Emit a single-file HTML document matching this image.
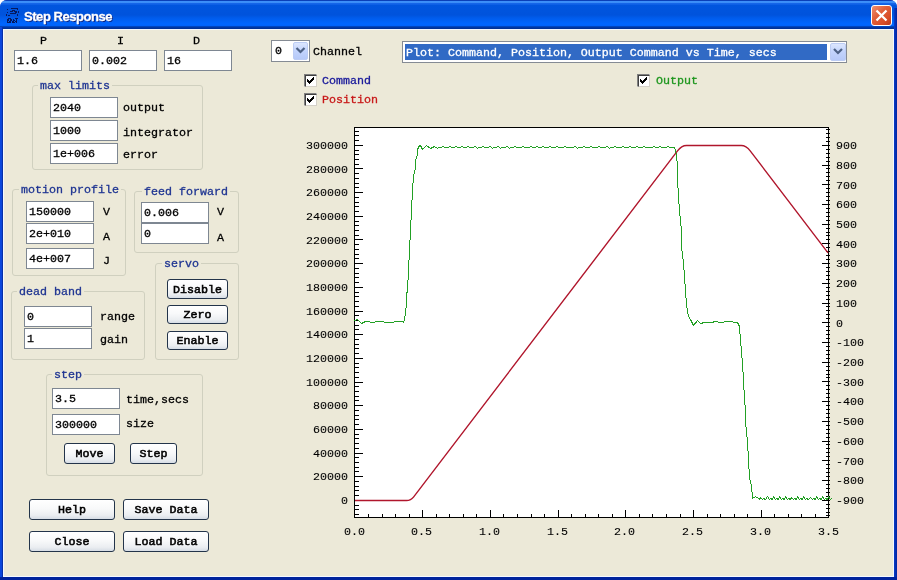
<!DOCTYPE html><html><head><meta charset="utf-8"><title>Step Response</title><style>
*{margin:0;padding:0;box-sizing:border-box}
.t,.pl,.ed span,.btn,.gt{will-change:transform}
html,body{width:897px;height:580px;overflow:hidden;background:#fff}
body{position:relative;font-family:"Liberation Mono", monospace;font-size:11.67px;color:#000;-webkit-text-stroke:0.3px currentColor}
.a{position:absolute}
.pl{position:absolute;white-space:pre;line-height:14px;height:14px;-webkit-text-stroke:0.1px #000}
.t{position:absolute;white-space:pre;line-height:14px;height:14px}
.ed{position:absolute;background:#fff;border:1px solid #7E8792}
.ed span{position:absolute;left:1.5px;top:3px;line-height:14px;white-space:pre}
.btn{position:absolute;padding-top:1px;border:1px solid #23344A;border-radius:3px;-webkit-text-stroke:0.55px #000;
 background:linear-gradient(#FFFFFF 0%,#F8F9FA 45%,#EBEEF1 80%,#D6DDE5 100%);text-align:center;white-space:pre}
.grp{position:absolute;border:1px solid #D0D0BF;border-radius:3px}
.gt{position:absolute;white-space:pre;background:#ECE9D8;color:#1F3592;-webkit-text-stroke:0.3px #1F3592;line-height:14px;padding:0 2px}
.cb{position:absolute;width:13px;height:13px;background:#fff;
 border-top:1px solid #808080;border-left:1px solid #808080;border-right:1px solid #fff;border-bottom:1px solid #fff}
.cb:before{content:'';position:absolute;left:0;top:0;right:-1px;bottom:-1px;border-top:1px solid #404040;border-left:1px solid #404040;border-right:1px solid #D4D0C8;border-bottom:1px solid #D4D0C8}
.cb svg{position:absolute}
</style></head><body>
<div class="a" style="left:0;top:0;width:897px;height:580px;background:#0A3FD0;border-radius:7px 7px 0 0"></div>
<div class="a" style="left:0;top:0;width:897px;height:29px;border-radius:7px 7px 0 0;background:linear-gradient(#0A3FB8 0px,#0A3FB8 1px,#3D90FA 1px,#3A8BF6 3px,#1868EA 3px,#0A5CE4 5px,#0055DE 5px,#0053DC 15px,#005CEC 18px,#0066FF 24px,#0062F8 26px,#0050D8 26px,#003AA8 27px,#002E90 29px)"></div>
<div class="a" style="left:0;top:27px;width:3px;height:553px;background:linear-gradient(90deg,#0B48E0,#0A44D8 2px,#0730A8 2px,#0730A8 3px)"></div>
<div class="a" style="left:894px;top:8px;width:3px;height:572px;background:linear-gradient(90deg,#0A3CC8,#0024A0)"></div>
<div class="a" style="left:0;top:577px;width:897px;height:3px;background:#00239C"></div>
<div class="a" style="left:3px;top:29px;width:891px;height:548px;background:#F4F8FF"></div>
<div class="a" style="left:4px;top:30px;width:889px;height:546px;background:#ECE9D8"></div>
<svg class="a" style="left:0;top:0" width="24" height="26" fill="#06195E" shape-rendering="crispEdges"><rect x="11" y="8" width="1" height="1"/><rect x="12" y="8" width="1" height="1"/><rect x="13" y="8" width="1" height="1"/><rect x="14" y="8" width="1" height="1"/><rect x="15" y="8" width="1" height="1"/><rect x="16" y="8" width="1" height="1"/><rect x="17" y="8" width="1" height="1"/><rect x="17" y="9" width="1" height="1"/><rect x="12" y="10" width="1" height="1"/><rect x="13" y="10" width="1" height="1"/><rect x="14" y="10" width="1" height="1"/><rect x="10" y="11" width="1" height="1"/><rect x="11" y="11" width="1" height="1"/><rect x="12" y="11" width="1" height="1"/><rect x="14" y="11" width="1" height="1"/><rect x="15" y="11" width="1" height="1"/><rect x="16" y="11" width="1" height="1"/><rect x="15" y="12" width="1" height="1"/><rect x="16" y="12" width="1" height="1"/><rect x="10" y="13" width="1" height="1"/><rect x="11" y="13" width="1" height="1"/><rect x="12" y="13" width="1" height="1"/><rect x="13" y="13" width="1" height="1"/><rect x="14" y="13" width="1" height="1"/><rect x="15" y="13" width="1" height="1"/><rect x="7" y="9" width="1" height="1"/><rect x="7" y="12" width="1" height="1"/><rect x="6" y="14" width="1" height="1"/><rect x="6" y="15" width="1" height="1"/><rect x="8" y="15" width="1" height="1"/><rect x="9" y="15" width="1" height="1"/><rect x="18" y="11" width="1" height="1"/><rect x="18" y="12" width="1" height="1"/><rect x="17" y="14" width="1" height="1"/><rect x="17" y="15" width="1" height="1"/><rect x="8" y="18" width="1" height="1"/><rect x="9" y="18" width="1" height="1"/><rect x="10" y="18" width="1" height="1"/><rect x="15" y="18" width="1" height="1"/><rect x="16" y="18" width="1" height="1"/><rect x="17" y="18" width="1" height="1"/><rect x="7" y="19" width="1" height="1"/><rect x="8" y="19" width="1" height="1"/><rect x="10" y="19" width="1" height="1"/><rect x="11" y="19" width="1" height="1"/><rect x="13" y="19" width="1" height="1"/><rect x="16" y="19" width="1" height="1"/><rect x="7" y="20" width="1" height="1"/><rect x="8" y="20" width="1" height="1"/><rect x="10" y="20" width="1" height="1"/><rect x="11" y="20" width="1" height="1"/><rect x="13" y="20" width="1" height="1"/><rect x="14" y="20" width="1" height="1"/><rect x="16" y="20" width="1" height="1"/><rect x="7" y="21" width="1" height="1"/><rect x="9" y="21" width="1" height="1"/><rect x="10" y="21" width="1" height="1"/><rect x="12" y="21" width="1" height="1"/><rect x="13" y="21" width="1" height="1"/><rect x="15" y="21" width="1" height="1"/><rect x="16" y="21" width="1" height="1"/><rect x="7" y="22" width="1" height="1"/><rect x="8" y="22" width="1" height="1"/><rect x="9" y="22" width="1" height="1"/><rect x="10" y="22" width="1" height="1"/><rect x="12" y="22" width="1" height="1"/><rect x="13" y="22" width="1" height="1"/><rect x="14" y="22" width="1" height="1"/><rect x="16" y="22" width="1" height="1"/></svg>
<div class="t" style="left:24px;top:8px;height:18px;line-height:18px;font-family:'Liberation Sans',sans-serif;font-weight:bold;font-size:13px;letter-spacing:-0.45px;color:#fff;text-shadow:1px 1px 0 #0A1F7A">Step Response</div>
<div class="a" style="left:871px;top:5px;width:21px;height:21px;border:1px solid #fff;border-radius:3px;background:linear-gradient(135deg,#F09070 0%,#E0603A 40%,#D84C26 75%,#B8381A 100%)"></div>
<svg class="a" style="left:871px;top:5px" width="21" height="21"><path d="M5.5 5.5L15.5 15.5M15.5 5.5L5.5 15.5" stroke="#fff" stroke-width="2.3"/></svg>
<div class="t" style="left:40px;top:34px;">P</div>
<div class="t" style="left:117px;top:34px;">I</div>
<div class="t" style="left:193px;top:34px;">D</div>
<div class="ed" style="left:14px;top:50px;width:68px;height:21px"><span>1.6</span></div>
<div class="ed" style="left:89px;top:50px;width:68px;height:21px"><span>0.002</span></div>
<div class="ed" style="left:164px;top:50px;width:68px;height:21px"><span>16</span></div>
<div class="grp" style="left:32px;top:85px;width:171px;height:85px"></div>
<div class="gt" style="left:38px;top:79px">max limits</div>
<div class="ed" style="left:50px;top:97px;width:68px;height:21px"><span>2040</span></div>
<div class="ed" style="left:50px;top:120px;width:68px;height:21px"><span>1000</span></div>
<div class="ed" style="left:50px;top:143px;width:68px;height:21px"><span>1e+006</span></div>
<div class="t" style="left:123px;top:101px;">output</div>
<div class="t" style="left:123px;top:126px;">integrator</div>
<div class="t" style="left:123px;top:148px;">error</div>
<div class="grp" style="left:12px;top:189px;width:114px;height:87px"></div>
<div class="gt" style="left:19px;top:183px">motion profile</div>
<div class="ed" style="left:26px;top:201px;width:68px;height:21px"><span>150000</span></div>
<div class="ed" style="left:26px;top:223px;width:68px;height:21px"><span>2e+010</span></div>
<div class="ed" style="left:26px;top:248px;width:68px;height:21px"><span>4e+007</span></div>
<div class="t" style="left:103px;top:205px;">V</div>
<div class="t" style="left:103px;top:230px;">A</div>
<div class="t" style="left:103px;top:254px;">J</div>
<div class="grp" style="left:134px;top:191px;width:105px;height:62px"></div>
<div class="gt" style="left:142px;top:185px">feed forward</div>
<div class="ed" style="left:141px;top:202px;width:68px;height:21px"><span>0.006</span></div>
<div class="ed" style="left:141px;top:223px;width:68px;height:21px"><span>0</span></div>
<div class="t" style="left:217px;top:205px;">V</div>
<div class="t" style="left:217px;top:231px;">A</div>
<div class="grp" style="left:155px;top:263px;width:84px;height:97px"></div>
<div class="gt" style="left:162px;top:257px">servo</div>
<div class="btn" style="left:167px;top:279px;width:61px;height:20px;line-height:18px">Disable</div>
<div class="btn" style="left:167px;top:305px;width:61px;height:19px;line-height:17px">Zero</div>
<div class="btn" style="left:167px;top:331px;width:61px;height:19px;line-height:17px">Enable</div>
<div class="grp" style="left:11px;top:291px;width:134px;height:69px"></div>
<div class="gt" style="left:17px;top:285px">dead band</div>
<div class="ed" style="left:24px;top:306px;width:68px;height:21px"><span>0</span></div>
<div class="ed" style="left:24px;top:328px;width:68px;height:21px"><span>1</span></div>
<div class="t" style="left:100px;top:310px;">range</div>
<div class="t" style="left:100px;top:333px;">gain</div>
<div class="grp" style="left:46px;top:374px;width:157px;height:102px"></div>
<div class="gt" style="left:52px;top:368px">step</div>
<div class="ed" style="left:52px;top:388px;width:68px;height:21px"><span>3.5</span></div>
<div class="ed" style="left:52px;top:414px;width:68px;height:21px"><span>300000</span></div>
<div class="t" style="left:126px;top:393px;">time,secs</div>
<div class="t" style="left:126px;top:417px;">size</div>
<div class="btn" style="left:64px;top:443px;width:51px;height:21px;line-height:19px">Move</div>
<div class="btn" style="left:130px;top:443px;width:47px;height:21px;line-height:19px">Step</div>
<div class="btn" style="left:29px;top:499px;width:86px;height:21px;line-height:19px">Help</div>
<div class="btn" style="left:123px;top:499px;width:86px;height:21px;line-height:19px">Save Data</div>
<div class="btn" style="left:29px;top:531px;width:86px;height:21px;line-height:19px">Close</div>
<div class="btn" style="left:123px;top:531px;width:86px;height:21px;line-height:19px">Load Data</div>
<div class="a" style="left:271px;top:40px;width:39px;height:22px;border:1px solid #858B94;background:#fff"></div>
<div class="t" style="left:275px;top:44px;">0</div>
<div class="a" style="left:293px;top:42px;width:15px;height:18px;border-radius:2px;border:1px solid #BCCCF4;background:linear-gradient(#DCE6FE,#C2D3FC 50%,#B6C9F8)"></div>
<svg class="a" style="left:293px;top:42px" width="15" height="18"><path d="M3.5 6.0L7.5 10.0L11.5 6.0" stroke="#4D6185" stroke-width="2.2" fill="none"/></svg>
<div class="t" style="left:313px;top:45px;">Channel</div>
<div class="a" style="left:402px;top:41px;width:445px;height:22px;border:1px solid #858B94;background:#fff"></div>
<div class="a" style="left:405px;top:44px;width:422px;height:16px;background:#316AC5"></div>
<div class="t" style="left:406px;top:46px;color:#fff">Plot: Command, Position, Output Command vs Time, secs</div>
<div class="a" style="left:830px;top:43px;width:16px;height:18px;border-radius:2px;border:1px solid #BCCCF4;background:linear-gradient(#DCE6FE,#C2D3FC 50%,#B6C9F8)"></div>
<svg class="a" style="left:830px;top:43px" width="16" height="18"><path d="M4.0 6.0L8.0 10.0L12.0 6.0" stroke="#4D6185" stroke-width="2.2" fill="none"/></svg>
<div class="cb" style="left:304px;top:74px"><svg width="7" height="7" shape-rendering="crispEdges" fill="#000" style="left:2px;top:2px"><rect x="6" y="0" width="1" height="1"/><rect x="5" y="1" width="1" height="1"/><rect x="6" y="1" width="1" height="1"/><rect x="0" y="2" width="1" height="1"/><rect x="4" y="2" width="1" height="1"/><rect x="5" y="2" width="1" height="1"/><rect x="6" y="2" width="1" height="1"/><rect x="0" y="3" width="1" height="1"/><rect x="1" y="3" width="1" height="1"/><rect x="3" y="3" width="1" height="1"/><rect x="4" y="3" width="1" height="1"/><rect x="5" y="3" width="1" height="1"/><rect x="0" y="4" width="1" height="1"/><rect x="1" y="4" width="1" height="1"/><rect x="2" y="4" width="1" height="1"/><rect x="3" y="4" width="1" height="1"/><rect x="4" y="4" width="1" height="1"/><rect x="1" y="5" width="1" height="1"/><rect x="2" y="5" width="1" height="1"/><rect x="3" y="5" width="1" height="1"/><rect x="2" y="6" width="1" height="1"/></svg></div>
<div class="t" style="left:322px;top:74px;color:#18189A">Command</div>
<div class="cb" style="left:304px;top:93px"><svg width="7" height="7" shape-rendering="crispEdges" fill="#000" style="left:2px;top:2px"><rect x="6" y="0" width="1" height="1"/><rect x="5" y="1" width="1" height="1"/><rect x="6" y="1" width="1" height="1"/><rect x="0" y="2" width="1" height="1"/><rect x="4" y="2" width="1" height="1"/><rect x="5" y="2" width="1" height="1"/><rect x="6" y="2" width="1" height="1"/><rect x="0" y="3" width="1" height="1"/><rect x="1" y="3" width="1" height="1"/><rect x="3" y="3" width="1" height="1"/><rect x="4" y="3" width="1" height="1"/><rect x="5" y="3" width="1" height="1"/><rect x="0" y="4" width="1" height="1"/><rect x="1" y="4" width="1" height="1"/><rect x="2" y="4" width="1" height="1"/><rect x="3" y="4" width="1" height="1"/><rect x="4" y="4" width="1" height="1"/><rect x="1" y="5" width="1" height="1"/><rect x="2" y="5" width="1" height="1"/><rect x="3" y="5" width="1" height="1"/><rect x="2" y="6" width="1" height="1"/></svg></div>
<div class="t" style="left:322px;top:93px;color:#C81818">Position</div>
<div class="cb" style="left:637px;top:74px"><svg width="7" height="7" shape-rendering="crispEdges" fill="#000" style="left:2px;top:2px"><rect x="6" y="0" width="1" height="1"/><rect x="5" y="1" width="1" height="1"/><rect x="6" y="1" width="1" height="1"/><rect x="0" y="2" width="1" height="1"/><rect x="4" y="2" width="1" height="1"/><rect x="5" y="2" width="1" height="1"/><rect x="6" y="2" width="1" height="1"/><rect x="0" y="3" width="1" height="1"/><rect x="1" y="3" width="1" height="1"/><rect x="3" y="3" width="1" height="1"/><rect x="4" y="3" width="1" height="1"/><rect x="5" y="3" width="1" height="1"/><rect x="0" y="4" width="1" height="1"/><rect x="1" y="4" width="1" height="1"/><rect x="2" y="4" width="1" height="1"/><rect x="3" y="4" width="1" height="1"/><rect x="4" y="4" width="1" height="1"/><rect x="1" y="5" width="1" height="1"/><rect x="2" y="5" width="1" height="1"/><rect x="3" y="5" width="1" height="1"/><rect x="2" y="6" width="1" height="1"/></svg></div>
<div class="t" style="left:656px;top:74px;color:#1E961E">Output</div>
<svg class="a" style="left:0;top:0" width="897" height="580"><rect x="354.5" y="127.5" width="474" height="390" fill="#fff" stroke="#000" stroke-width="1"/><path d="M355 514.5h4M355 509.5h4M355 505.5h4M355 500.5h8M355 495.5h4M355 490.5h4M355 486.5h4M355 481.5h4M355 476.5h8M355 471.5h4M355 467.5h4M355 462.5h4M355 457.5h4M355 453.5h8M355 448.5h4M355 443.5h4M355 438.5h4M355 434.5h4M355 429.5h8M355 424.5h4M355 419.5h4M355 415.5h4M355 410.5h4M355 405.5h8M355 400.5h4M355 396.5h4M355 391.5h4M355 386.5h4M355 382.5h8M355 377.5h4M355 372.5h4M355 367.5h4M355 363.5h4M355 358.5h8M355 353.5h4M355 348.5h4M355 344.5h4M355 339.5h4M355 334.5h8M355 329.5h4M355 325.5h4M355 320.5h4M355 315.5h4M355 311.5h8M355 306.5h4M355 301.5h4M355 296.5h4M355 292.5h4M355 287.5h8M355 282.5h4M355 277.5h4M355 273.5h4M355 268.5h4M355 263.5h8M355 258.5h4M355 254.5h4M355 249.5h4M355 244.5h4M355 239.5h8M355 235.5h4M355 230.5h4M355 225.5h4M355 221.5h4M355 216.5h8M355 211.5h4M355 206.5h4M355 202.5h4M355 197.5h4M355 192.5h8M355 187.5h4M355 183.5h4M355 178.5h4M355 173.5h4M355 168.5h8M355 164.5h4M355 159.5h4M355 154.5h4M355 150.5h4M355 145.5h8M355 140.5h4M355 135.5h4M355 131.5h4M826 515.5h4M826 512.5h4M826 508.5h4M826 504.5h4M822 500.5h8M826 496.5h4M826 492.5h4M826 488.5h4M826 484.5h4M822 480.5h8M826 476.5h4M826 472.5h4M826 468.5h4M826 464.5h4M822 460.5h8M826 456.5h4M826 452.5h4M826 448.5h4M826 444.5h4M822 441.5h8M826 437.5h4M826 433.5h4M826 429.5h4M826 425.5h4M822 421.5h8M826 417.5h4M826 413.5h4M826 409.5h4M826 405.5h4M822 401.5h8M826 397.5h4M826 393.5h4M826 389.5h4M826 385.5h4M822 381.5h8M826 377.5h4M826 374.5h4M826 370.5h4M826 366.5h4M822 362.5h8M826 358.5h4M826 354.5h4M826 350.5h4M826 346.5h4M822 342.5h8M826 338.5h4M826 334.5h4M826 330.5h4M826 326.5h4M822 322.5h8M826 318.5h4M826 314.5h4M826 310.5h4M826 306.5h4M822 303.5h8M826 299.5h4M826 295.5h4M826 291.5h4M826 287.5h4M822 283.5h8M826 279.5h4M826 275.5h4M826 271.5h4M826 267.5h4M822 263.5h8M826 259.5h4M826 255.5h4M826 251.5h4M826 247.5h4M822 243.5h8M826 239.5h4M826 235.5h4M826 232.5h4M826 228.5h4M822 224.5h8M826 220.5h4M826 216.5h4M826 212.5h4M826 208.5h4M822 204.5h8M826 200.5h4M826 196.5h4M826 192.5h4M826 188.5h4M822 184.5h8M826 180.5h4M826 176.5h4M826 172.5h4M826 168.5h4M822 165.5h8M826 161.5h4M826 157.5h4M826 153.5h4M826 149.5h4M822 145.5h8M826 141.5h4M826 137.5h4M826 133.5h4M826 129.5h4M368.5 517v-3M382.5 517v-3M395.5 517v-3M409.5 517v-3M422.5 517v-7M436.5 517v-3M449.5 517v-3M463.5 517v-3M476.5 517v-3M490.5 517v-7M503.5 517v-3M517.5 517v-3M531.5 517v-3M544.5 517v-3M558.5 517v-7M571.5 517v-3M585.5 517v-3M598.5 517v-3M612.5 517v-3M625.5 517v-7M639.5 517v-3M652.5 517v-3M666.5 517v-3M680.5 517v-3M693.5 517v-7M707.5 517v-3M720.5 517v-3M734.5 517v-3M747.5 517v-3M761.5 517v-7M774.5 517v-3M788.5 517v-3M801.5 517v-3M815.5 517v-3" stroke="#000" stroke-width="1" fill="none" shape-rendering="crispEdges"/><path d="M355 500.5 L406.5 500.5 Q410.9 500.5 413.5 497.1 L677.5 150.9 Q681.5 145.5 686.5 145.5 L741.2 145.5 Q746.2 145.5 750.2 150.8 L828 252.9" stroke="#B0162C" stroke-width="1.4" fill="none"/><polyline points="354.5,320.5 357.5,319.5 361.5,323.5 365.5,321.5 369.5,321.5 370.5,322.5 374.5,322.5 375.5,321.5 383.5,321.5 384.5,322.5 393.5,322.5 394.5,321.5 402.5,321.5 403.5,322.5 404.5,319.5 405.5,312.5 406.5,304.5 406.5,294.5 407.5,290.5 412.5,190.5 413.5,176.5 415.5,167.5 415.5,160.5 417.5,154.5 417.5,149.5 419.5,145.5 420.5,145.5 422.5,149.5 426.5,145.5 430.5,148.5 434.5,146.5 437.5,148.5 438.5,147.5 439.5,147.5 440.5,147.5 441.5,147.5 442.5,146.5 443.5,146.5 444.5,147.5 445.5,147.5 446.5,147.5 447.5,147.5 448.5,147.5 449.5,146.5 450.5,146.5 451.5,147.5 452.5,147.5 453.5,147.5 454.5,147.5 455.5,146.5 456.5,146.5 457.5,147.5 458.5,147.5 459.5,147.5 460.5,147.5 461.5,146.5 462.5,146.5 463.5,147.5 464.5,147.5 465.5,147.5 466.5,147.5 467.5,146.5 468.5,146.5 469.5,147.5 470.5,147.5 471.5,147.5 472.5,147.5 473.5,147.5 474.5,146.5 475.5,146.5 476.5,147.5 477.5,148.5 478.5,147.5 478.5,147.5 479.5,147.5 480.5,147.5 481.5,147.5 482.5,146.5 483.5,146.5 484.5,147.5 485.5,147.5 486.5,147.5 487.5,147.5 488.5,147.5 489.5,146.5 490.5,146.5 491.5,147.5 492.5,148.5 493.5,147.5 493.5,147.5 494.5,147.5 495.5,147.5 496.5,147.5 497.5,146.5 498.5,146.5 499.5,147.5 500.5,148.5 501.5,147.5 501.5,147.5 502.5,147.5 503.5,147.5 504.5,147.5 505.5,147.5 506.5,146.5 507.5,146.5 508.5,147.5 509.5,148.5 510.5,147.5 510.5,147.5 511.5,147.5 512.5,147.5 513.5,147.5 514.5,146.5 515.5,146.5 516.5,147.5 517.5,147.5 518.5,147.5 519.5,147.5 520.5,147.5 521.5,147.5 522.5,146.5 523.5,146.5 524.5,147.5 525.5,147.5 526.5,147.5 527.5,147.5 528.5,147.5 529.5,147.5 530.5,146.5 531.5,146.5 532.5,147.5 533.5,147.5 534.5,147.5 535.5,147.5 536.5,146.5 537.5,146.5 538.5,147.5 539.5,147.5 540.5,147.5 541.5,147.5 542.5,146.5 543.5,146.5 544.5,147.5 545.5,147.5 546.5,147.5 547.5,147.5 548.5,147.5 549.5,146.5 550.5,146.5 551.5,147.5 552.5,147.5 553.5,147.5 554.5,147.5 555.5,147.5 556.5,146.5 557.5,146.5 558.5,147.5 559.5,147.5 560.5,147.5 561.5,147.5 562.5,147.5 563.5,147.5 564.5,146.5 565.5,146.5 566.5,147.5 567.5,147.5 568.5,147.5 569.5,147.5 570.5,147.5 571.5,147.5 572.5,147.5 573.5,147.5 574.5,146.5 575.5,146.5 576.5,147.5 577.5,148.5 578.5,147.5 578.5,147.5 579.5,147.5 580.5,147.5 581.5,147.5 582.5,147.5 583.5,146.5 584.5,146.5 585.5,147.5 586.5,147.5 587.5,147.5 588.5,147.5 589.5,147.5 590.5,146.5 591.5,146.5 592.5,147.5 593.5,147.5 594.5,147.5 595.5,147.5 596.5,147.5 597.5,147.5 598.5,146.5 599.5,146.5 600.5,147.5 601.5,147.5 602.5,147.5 603.5,147.5 604.5,147.5 605.5,147.5 606.5,146.5 607.5,146.5 608.5,147.5 609.5,148.5 610.5,147.5 610.5,147.5 611.5,147.5 612.5,147.5 613.5,147.5 614.5,146.5 615.5,146.5 616.5,147.5 617.5,147.5 618.5,147.5 619.5,147.5 620.5,147.5 621.5,147.5 622.5,146.5 623.5,146.5 624.5,147.5 625.5,147.5 626.5,147.5 627.5,147.5 628.5,147.5 629.5,146.5 630.5,146.5 631.5,147.5 632.5,147.5 633.5,147.5 634.5,147.5 635.5,147.5 636.5,146.5 637.5,146.5 638.5,147.5 639.5,147.5 640.5,147.5 641.5,147.5 642.5,147.5 643.5,146.5 644.5,146.5 645.5,147.5 646.5,147.5 647.5,147.5 648.5,147.5 649.5,147.5 650.5,147.5 651.5,147.5 652.5,147.5 653.5,146.5 654.5,146.5 655.5,147.5 656.5,147.5 657.5,147.5 658.5,147.5 659.5,146.5 660.5,146.5 661.5,147.5 662.5,147.5 663.5,147.5 664.5,147.5 665.5,147.5 666.5,147.5 667.5,146.5 668.5,146.5 669.5,147.5 670.5,147.5 671.5,147.5 672.5,147.5 673.5,147.5 674.5,147.5 675.5,150.5 676.5,155.5 677.5,166.5 677.5,180.5 678.5,195.5 679.5,211.5 681.5,230.5 681.5,246.5 683.5,262.5 684.5,277.5 685.5,290.5 686.5,304.5 687.5,311.5 688.5,316.5 690.5,319.5 693.5,325.5 697.5,320.5 700.5,323.5 704.5,322.5 711.5,322.5 715.5,321.5 720.5,322.5 728.5,321.5 737.5,322.5 739.5,326.5 740.5,340.5 741.5,351.5 742.5,364.5 743.5,379.5 744.5,399.5 745.5,410.5 745.5,422.5 747.5,441.5 748.5,460.5 749.5,477.5 751.5,485.5 752.5,498.5 755.5,496.5 758.5,498.5 759.5,499.5 760.5,497.5 762.5,499.5 763.5,498.5 765.5,499.5 767.5,496.5 769.5,499.5 770.5,498.5 772.5,499.5 773.5,496.5 775.5,499.5 776.5,498.5 778.5,499.5 779.5,496.5 781.5,499.5 782.5,498.5 784.5,499.5 785.5,496.5 787.5,499.5 788.5,498.5 790.5,499.5 791.5,497.5 793.5,499.5 794.5,498.5 796.5,499.5 797.5,496.5 799.5,499.5 800.5,498.5 802.5,499.5 803.5,496.5 805.5,499.5 806.5,498.5 808.5,499.5 810.5,497.5 812.5,499.5 813.5,498.5 815.5,499.5 816.5,496.5 818.5,499.5 819.5,498.5 821.5,499.5 822.5,496.5 824.5,499.5 825.5,498.5 827.5,499.5 828.5,496.5 830.5,499.5 831.5,498.5" stroke="#22A024" stroke-width="1" fill="none" shape-rendering="crispEdges"/></svg>
<div class="pl" style="left:341px;top:493.9px">0</div>
<div class="pl" style="left:313px;top:470.2px">20000</div>
<div class="pl" style="left:313px;top:446.6px">40000</div>
<div class="pl" style="left:313px;top:422.9px">60000</div>
<div class="pl" style="left:313px;top:399.2px">80000</div>
<div class="pl" style="left:306px;top:375.5px">100000</div>
<div class="pl" style="left:306px;top:351.9px">120000</div>
<div class="pl" style="left:306px;top:328.2px">140000</div>
<div class="pl" style="left:306px;top:304.5px">160000</div>
<div class="pl" style="left:306px;top:280.8px">180000</div>
<div class="pl" style="left:306px;top:257.2px">200000</div>
<div class="pl" style="left:306px;top:233.5px">220000</div>
<div class="pl" style="left:306px;top:209.8px">240000</div>
<div class="pl" style="left:306px;top:186.1px">260000</div>
<div class="pl" style="left:306px;top:162.5px">280000</div>
<div class="pl" style="left:306px;top:138.8px">300000</div>
<div class="pl" style="left:836px;top:494.0px">-900</div>
<div class="pl" style="left:836px;top:474.3px">-800</div>
<div class="pl" style="left:836px;top:454.6px">-700</div>
<div class="pl" style="left:836px;top:434.9px">-600</div>
<div class="pl" style="left:836px;top:415.1px">-500</div>
<div class="pl" style="left:836px;top:395.4px">-400</div>
<div class="pl" style="left:836px;top:375.7px">-300</div>
<div class="pl" style="left:836px;top:356.0px">-200</div>
<div class="pl" style="left:836px;top:336.3px">-100</div>
<div class="pl" style="left:836px;top:316.6px">0</div>
<div class="pl" style="left:836px;top:296.8px">100</div>
<div class="pl" style="left:836px;top:277.1px">200</div>
<div class="pl" style="left:836px;top:257.4px">300</div>
<div class="pl" style="left:836px;top:237.7px">400</div>
<div class="pl" style="left:836px;top:218.0px">500</div>
<div class="pl" style="left:836px;top:198.2px">600</div>
<div class="pl" style="left:836px;top:178.5px">700</div>
<div class="pl" style="left:836px;top:158.8px">800</div>
<div class="pl" style="left:836px;top:139.1px">900</div>
<div class="pl" style="left:343.5px;top:524.7px">0.0</div>
<div class="pl" style="left:411.2px;top:524.7px">0.5</div>
<div class="pl" style="left:478.9px;top:524.7px">1.0</div>
<div class="pl" style="left:546.6px;top:524.7px">1.5</div>
<div class="pl" style="left:614.4px;top:524.7px">2.0</div>
<div class="pl" style="left:682.1px;top:524.7px">2.5</div>
<div class="pl" style="left:749.8px;top:524.7px">3.0</div>
<div class="pl" style="left:817.5px;top:524.7px">3.5</div>
</body></html>
